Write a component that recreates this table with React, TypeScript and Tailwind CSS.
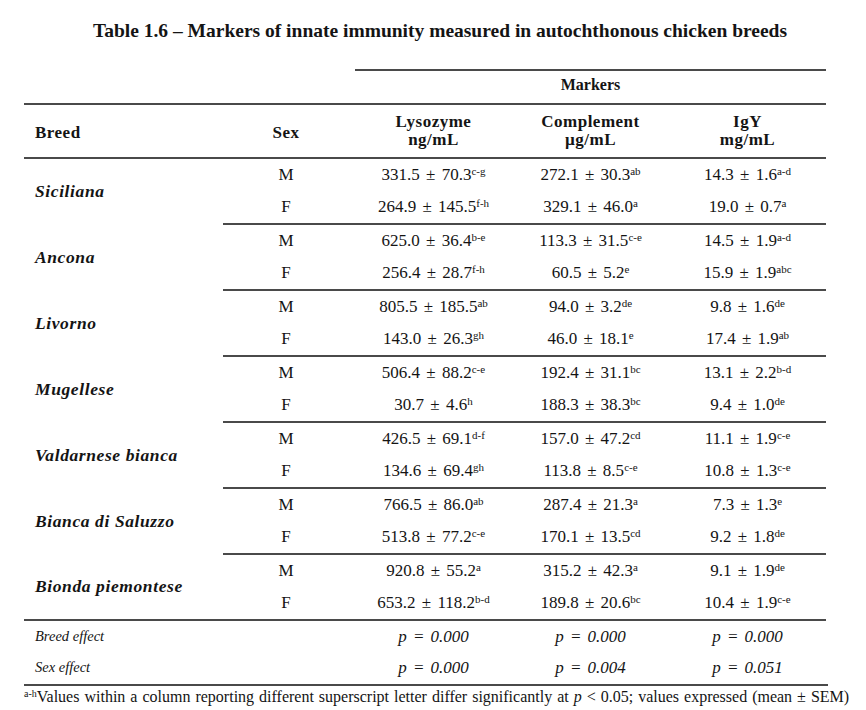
import { Fragment } from "react";

type Cell = [string, string];

type Group = {
  breed: string;
  male: Cell[];
  female: Cell[];
};

const GROUPS: Group[] = [
  {
    breed: "Siciliana",
    male: [["331.5 ± 70.3", "c-g"], ["272.1 ± 30.3", "ab"], ["14.3 ± 1.6", "a-d"]],
    female: [["264.9 ± 145.5", "f-h"], ["329.1 ± 46.0", "a"], ["19.0 ± 0.7", "a"]],
  },
  {
    breed: "Ancona",
    male: [["625.0 ± 36.4", "b-e"], ["113.3 ± 31.5", "c-e"], ["14.5 ± 1.9", "a-d"]],
    female: [["256.4 ± 28.7", "f-h"], ["60.5 ± 5.2", "e"], ["15.9 ± 1.9", "abc"]],
  },
  {
    breed: "Livorno",
    male: [["805.5 ± 185.5", "ab"], ["94.0 ± 3.2", "de"], ["9.8 ± 1.6", "de"]],
    female: [["143.0 ± 26.3", "gh"], ["46.0 ± 18.1", "e"], ["17.4 ± 1.9", "ab"]],
  },
  {
    breed: "Mugellese",
    male: [["506.4 ± 88.2", "c-e"], ["192.4 ± 31.1", "bc"], ["13.1 ± 2.2", "b-d"]],
    female: [["30.7 ± 4.6", "h"], ["188.3 ± 38.3", "bc"], ["9.4 ± 1.0", "de"]],
  },
  {
    breed: "Valdarnese bianca",
    male: [["426.5 ± 69.1", "d-f"], ["157.0 ± 47.2", "cd"], ["11.1 ± 1.9", "c-e"]],
    female: [["134.6 ± 69.4", "gh"], ["113.8 ± 8.5", "c-e"], ["10.8 ± 1.3", "c-e"]],
  },
  {
    breed: "Bianca di Saluzzo",
    male: [["766.5 ± 86.0", "ab"], ["287.4 ± 21.3", "a"], ["7.3 ± 1.3", "e"]],
    female: [["513.8 ± 77.2", "c-e"], ["170.1 ± 13.5", "cd"], ["9.2 ± 1.8", "de"]],
  },
  {
    breed: "Bionda piemontese",
    male: [["920.8 ± 55.2", "a"], ["315.2 ± 42.3", "a"], ["9.1 ± 1.9", "de"]],
    female: [["653.2 ± 118.2", "b-d"], ["189.8 ± 20.6", "bc"], ["10.4 ± 1.9", "c-e"]],
  },
];

const EFFECTS: { label: string; values: string[] }[] = [
  { label: "Breed effect", values: ["0.000", "0.000", "0.000"] },
  { label: "Sex effect", values: ["0.000", "0.004", "0.051"] },
];

const rule = "border-t-2 border-[#4a4a4a]";

function Value({ cell }: { cell: Cell }) {
  return (
    <span className="whitespace-nowrap [word-spacing:2px]">
      {cell[0]}
      <sup className="text-[11px] [word-spacing:0]">{cell[1]}</sup>
    </span>
  );
}

export default function App() {
  return (
    <div className="min-h-[710px] w-[866px] bg-white font-['Liberation_Serif','Times_New_Roman',serif] text-[#141414]">
      <h1 className="pl-[14px] pt-[20px] text-center text-[19.5px] font-bold leading-[22px]">
        Table 1.6 – Markers of innate immunity measured in autochthonous chicken breeds
      </h1>

      <table className="ml-[24px] mt-[27px] w-[802px] table-fixed border-collapse">
        <colgroup>
          <col className="w-[199px]" />
          <col className="w-[132px]" />
          <col className="w-[157px]" />
          <col className="w-[157px]" />
          <col className="w-[157px]" />
        </colgroup>
        <thead>
          <tr className="h-[34px]">
            <th colSpan={2} />
            <th colSpan={3} className={`${rule} pb-[4px] text-[16px] font-bold`}>
              Markers
            </th>
          </tr>
          <tr className={`h-[54px] ${rule} text-[17px] tracking-[0.5px]`}>
            <th className="pl-[11px] pt-[4px] text-left font-bold">Breed</th>
            <th className="pr-[6px] pt-[4px] font-bold">Sex</th>
            {[
              ["Lysozyme", "ng/mL"],
              ["Complement", "µg/mL"],
              ["IgY", "mg/mL"],
            ].map(([name, unit]) => (
              <th key={name} className="font-bold leading-[18px]">
                {name}
                <br />
                {unit}
              </th>
            ))}
          </tr>
        </thead>
        <tbody className="text-[17px]">
          {GROUPS.map((g, i) => (
            <Fragment key={g.breed}>
              <tr className={`h-[33px] ${i === 0 ? rule : ""}`}>
                <td
                  rowSpan={2}
                  className="pl-[11px] text-[17.5px] font-bold italic tracking-[0.6px]"
                >
                  {g.breed}
                </td>
                <td className={`pr-[6px] text-center ${i === 0 ? "" : rule}`}>M</td>
                {g.male.map((c, k) => (
                  <td key={k} className={`text-center ${i === 0 ? "" : rule}`}>
                    <Value cell={c} />
                  </td>
                ))}
              </tr>
              <tr className="h-[33px]">
                <td className="pr-[6px] text-center">F</td>
                {g.female.map((c, k) => (
                  <td key={k} className="text-center">
                    <Value cell={c} />
                  </td>
                ))}
              </tr>
            </Fragment>
          ))}
          {EFFECTS.map((e, i) => (
            <tr key={e.label} className={`h-[32px] ${i === 0 ? rule : ""}`}>
              <td className="pl-[11px] text-[14.5px] italic">{e.label}</td>
              <td />
              {e.values.map((v, k) => (
                <td key={k} className="text-center italic [word-spacing:2px]">
                  p = {v}
                </td>
              ))}
            </tr>
          ))}
        </tbody>
      </table>

      <p
        className={`ml-[24px] w-[804px] ${rule} whitespace-nowrap text-[16px] leading-[22px] [word-spacing:1px]`}
      >
        <sup className="text-[10px]">a-h</sup>Values within a column reporting different superscript letter differ
        significantly at <i>p</i> &lt; 0.05; values expressed (mean ± SEM)
      </p>
    </div>
  );
}
